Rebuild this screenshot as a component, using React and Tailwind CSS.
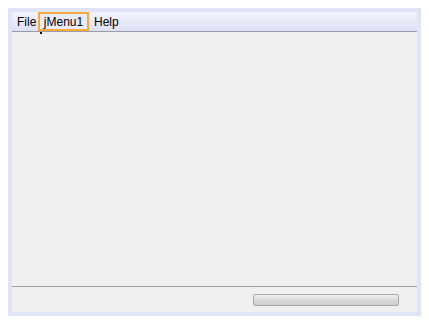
import React from 'react';

export default function App() {
  return (
    <div className="w-[429px] h-[324px] bg-white p-[8px]" style={{ fontFamily: '"Liberation Sans", Arial, sans-serif' }}>
      <div className="w-full h-full bg-[#e1e3f7] p-[4px] flex flex-col">
        <div className="relative h-[20px] flex items-stretch pl-[5px] text-[12px] text-black bg-gradient-to-b from-[#f3f4fc] to-[#dde0f5] border-b border-[#9c9ca4]">
          <div className="flex items-center w-[21px]">File</div>
          <div className="flex items-center justify-center w-[51px] border-2 border-[#f7a93a] bg-[#e9ebf8]">jMenu1</div>
          <div className="flex items-center ml-[5px]">Help</div>
          <span className="absolute left-[28px] top-[20px] w-[2px] h-[2px] bg-black" />
        </div>
        <div className="flex-1 bg-[#f0f0f0] border-b border-[#a0a0a0]" />
        <div className="h-[25px] bg-[#f0f0f0] flex items-center justify-end pr-[18px]">
          <div className="w-[146px] h-[12px] rounded-[2px] border border-[#a8a8a8] bg-gradient-to-b from-[#f2f2f2] via-[#dadada] to-[#cfcfcf]" />
        </div>
      </div>
    </div>
  );
}
